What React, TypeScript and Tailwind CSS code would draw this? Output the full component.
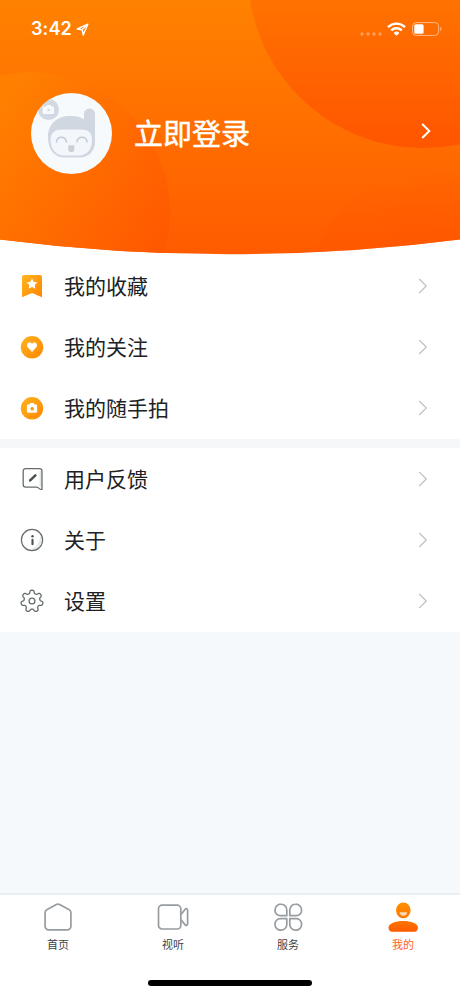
import type { ReactNode } from "react";

type Row = { label: string; icon: ReactNode };

function Chevron({ className }: { className: string }) {
  return (
    <svg viewBox="0 0 10 16" fill="none" stroke="currentColor" className={className}>
      <path d="M1.2 1 8.3 8 1.2 15" />
    </svg>
  );
}

function BookmarkIcon() {
  return (
    <svg width="24" height="24" viewBox="0 0 24 24">
      <path d="M4 1h16a2 2 0 0 1 2 2v20.3l-10-4.3-10 4.3V3a2 2 0 0 1 2-2Z" fill="url(#amber)" />
      <path d="m12 4.5 1.7 3.3 3.7.6-2.7 2.6.6 3.7-3.3-1.7-3.3 1.7.6-3.7-2.7-2.6 3.7-.6Z" fill="#fff" />
    </svg>
  );
}

function HeartIcon() {
  return (
    <svg width="24" height="24" viewBox="0 0 24 24">
      <circle cx="12" cy="12.3" r="11.2" fill="url(#amber)" />
      <path d="M12 17 7.9 12.6C5.9 10.4 7.3 7.6 9.6 7.6c1.1 0 1.9.5 2.4 1.3.5-.8 1.3-1.3 2.4-1.3 2.3 0 3.7 2.8 1.7 5Z" fill="#fff" />
    </svg>
  );
}

function CameraIcon() {
  return (
    <svg width="24" height="24" viewBox="0 0 24 24">
      <circle cx="12" cy="12.3" r="11.2" fill="url(#amber)" />
      <path d="M8.1 8.4h1.4l.8-1.5h3.4l.8 1.5h1.4c.7 0 1.2.5 1.2 1.2v6c0 .7-.5 1.2-1.2 1.2H8.1c-.7 0-1.2-.5-1.2-1.2v-6c0-.7.5-1.2 1.2-1.2Z" fill="#fff" />
      <circle cx="12.2" cy="12.8" r="1.8" fill="#ff9800" />
    </svg>
  );
}

function FeedbackIcon() {
  return (
    <svg width="24" height="24" viewBox="0 0 24 24" fill="none">
      <path d="M19.5 3.5v15l1.9 2.8V4.2Z" fill="#dfe4e5" />
      <path
        d="M5.6 1.6h14A2.4 2.4 0 0 1 22 4v18.4c-1.6.3-2.3-.3-3-1-.7-.8-1.5-1.3-2.6-1.3H5.6a2.4 2.4 0 0 1-2.4-2.4V4a2.4 2.4 0 0 1 2.4-2.4Z"
        stroke="#666c6e"
        strokeWidth="1.3"
        strokeLinejoin="round"
      />
      <path d="m10.4 13.1 5-4.7" stroke="#4b5052" strokeWidth="2.5" strokeLinecap="round" />
      <path d="m8.8 14.8.6-2.5 1.9 1.8Z" fill="#4b5052" />
    </svg>
  );
}

function InfoIcon() {
  return (
    <svg width="24" height="24" viewBox="0 0 24 24" fill="none">
      <path d="M20.4 7.5a10 10 0 0 1-12 13.8C15 21 20 15.5 20.4 7.5Z" fill="#e6eaeb" />
      <circle cx="12" cy="12" r="10.6" stroke="#666c6e" strokeWidth="1.2" />
      <circle cx="12.5" cy="8.2" r="1.2" fill="#4b5052" />
      <path d="M12.5 11.9v4.3" stroke="#4b5052" strokeWidth="2.1" strokeLinecap="round" />
    </svg>
  );
}

// seven rounded teeth, the first one pointing up
const gearPath =
  Array.from({ length: 140 }, (_, i) => {
    const angle = (i / 140) * Math.PI * 2;
    const r = 9.5 + 1.55 * Math.tanh(2 * Math.cos(7 * angle));
    const x = 12 + r * Math.sin(angle);
    const y = 12.2 - r * Math.cos(angle);
    return `${i === 0 ? "M" : "L"}${x.toFixed(2)} ${y.toFixed(2)}`;
  }).join("") + "Z";

function GearIcon() {
  return (
    <svg width="24" height="24" viewBox="0 0 24 24" fill="none" stroke="#666c6e" strokeWidth="1.3" strokeLinejoin="round">
      <path d="M19.5 12.5a8 8 0 0 1-9 7.5c4 .5 8-3 9-7.5Z" fill="#e6eaeb" stroke="none" />
      <path d={gearPath} />
      <circle cx="12" cy="12" r="2.9" />
    </svg>
  );
}

const groups: Row[][] = [
  [
    { label: "我的收藏", icon: <BookmarkIcon /> },
    { label: "我的关注", icon: <HeartIcon /> },
    { label: "我的随手拍", icon: <CameraIcon /> },
  ],
  [
    { label: "用户反馈", icon: <FeedbackIcon /> },
    { label: "关于", icon: <InfoIcon /> },
    { label: "设置", icon: <GearIcon /> },
  ],
];

const tabs = [
  {
    label: "首页",
    icon: (
      <path d="M14.3 2.5a3.5 3.5 0 0 1 3.4 0l9.5 5.3a3.2 3.2 0 0 1 1.7 2.8v13.7a3.6 3.6 0 0 1-3.6 3.6H6.700a3.600 3.600 0 0 1-3.600-3.600V10.600a3.200 3.200 0 0 1 1.700-2.800Z" />
    ),
  },
  {
    label: "视听",
    icon: (
      <>
        <rect x="1.5" y="3.2" width="22.3" height="23.8" rx="3.6" />
        <path d="M24 12.5 28.2 7.3c.8-1 2.4-.6 2.4.8v14c0 1.4-1.6 1.8-2.4.8L24 17.7" />
      </>
    ),
  },
  {
    label: "服务",
    icon: (
      <>
        <path d="M9 2.2A5.8 5.8 0 0 1 14.800 8v5.700H8.300A5.300 5.300 0 0 1 3 8.400V8a5.800 5.800 0 0 1 6-5.800Z" />
        <path d="M23.600 2.200A5.800 5.800 0 0 0 17.800 8v5.700h6.500a5.300 5.300 0 0 0 5.300-5.300V8a5.800 5.800 0 0 0-6-5.800Z" />
        <path d="M9 28.200a5.800 5.800 0 0 0 5.800-5.800v-5.700H8.300A5.300 5.300 0 0 0 3 22v.4a5.800 5.800 0 0 0 6 5.800Z" />
        <path d="M23.600 28.200a5.800 5.800 0 0 1-5.800-5.800v-5.700h6.500a5.300 5.300 0 0 1 5.300 5.300v.4a5.800 5.800 0 0 1-6 5.800Z" />
      </>
    ),
  },
  {
    label: "我的",
    active: true,
    icon: (
      <g stroke="none">
        <ellipse cx="16.3" cy="8.3" rx="7.3" ry="7.9" fill="url(#head)" />
        <path d="M12.6 10.200h7.500c-.2 2.600-1.500 3.500-3.700 3.500s-3.600-.9-3.800-3.500Z" fill="#ffe3c4" opacity=".9" />
        <path d="M1.500 25.500C1.500 21.500 8.400 19 16.200 19s14.700 2.500 14.700 6.500c0 2.500-1.200 4.200-3.500 4.200H5c-2.300 0-3.500-1.700-3.500-4.200Z" fill="url(#torso)" />
      </g>
    ),
  },
];

function Gradients() {
  return (
    <svg className="absolute size-0">
      <defs>
        <linearGradient id="amber" x1="0" y1="0" x2="1" y2="1">
          <stop stopColor="#ffb51f" />
          <stop offset="1" stopColor="#ff8500" />
        </linearGradient>
        <linearGradient id="head" x1="0" y1="0" x2="0" y2="1">
          <stop stopColor="#ff9000" />
          <stop offset="1" stopColor="#ff7800" />
        </linearGradient>
        <linearGradient id="torso" x1="0" y1="0" x2="0" y2="1">
          <stop stopColor="#ff7600" />
          <stop offset="1" stopColor="#ff5a00" />
        </linearGradient>
      </defs>
    </svg>
  );
}

function HeaderBackground() {
  return (
    <svg className="absolute inset-0" width="460" height="256" viewBox="0 0 460 256">
      <defs>
        <linearGradient id="base" x1="0" y1="0" x2="0" y2="1">
          <stop stopColor="#ff8200" />
          <stop offset="1" stopColor="#ff5b00" />
        </linearGradient>
        <linearGradient id="bubbleTop" gradientUnits="userSpaceOnUse" x1="0" y1="0" x2="0" y2="148">
          <stop stopColor="#ff7200" />
          <stop offset="1" stopColor="#ff5500" />
        </linearGradient>
        <linearGradient id="bubbleLeft" gradientUnits="userSpaceOnUse" x1="0" y1="110" x2="165" y2="235">
          <stop stopColor="#ff7f00" />
          <stop offset="1" stopColor="#ff5900" />
        </linearGradient>
        <linearGradient id="bubbleRight" gradientUnits="userSpaceOnUse" x1="390" y1="180" x2="405" y2="255">
          <stop stopColor="#ff5500" stopOpacity="0" />
          <stop offset="1" stopColor="#ff5500" stopOpacity=".7" />
        </linearGradient>
        <clipPath id="curve">
          <path d="M0 0h460v239.500Q230 269 0 239.500Z" />
        </clipPath>
      </defs>
      <g clipPath="url(#curve)">
        <rect width="460" height="256" fill="url(#base)" />
        <circle cx="30" cy="212" r="140" fill="url(#bubbleLeft)" />
        <circle cx="430" cy="290" r="120" fill="url(#bubbleRight)" />
        <circle cx="423" cy="-27" r="175" fill="url(#bubbleTop)" />
      </g>
    </svg>
  );
}

function Avatar() {
  return (
    <svg width="81" height="81" viewBox="0 0 81 81">
      <defs>
        <clipPath id="round">
          <circle cx="40.5" cy="40.5" r="40.5" />
        </clipPath>
      </defs>
      <g clipPath="url(#round)">
        <rect width="81" height="81" fill="#f7fafd" />
        <circle cx="17.500" cy="16.500" r="10.500" fill="#d2d9e3" />
        <path d="M13 13.500h2.200l1.300-1.600h3l1.300 1.600h1c.8 0 1.200.5 1.200 1.200v5c0 .8-.5 1.300-1.300 1.300H13c-.8 0-1.300-.5-1.300-1.300v-4.900c0-.8.5-1.300 1.300-1.300Z" fill="#f7fafd" />
        <path d="m16.500 15 3 2-3 1.800Z" fill="#d2d9e3" />
        <path d="M17 44c0-13 9-21 22-21 6 0 10 .6 14 3.400V21a5.500 5.500 0 0 1 11 0v28c0 9-6.500 15.500-15 15.500H33c-9.500 0-16-8-16-20.500Z" fill="#d0d7e1" />
        <path d="M19.500 47c0-7.500 4.500-10.500 12-10.500h18c8 0 11.500 3 11.500 10.500 0 9-5 15.500-13 15.500H33C25 62.500 19.500 56 19.500 47Z" fill="#f3f7fb" />
        <path d="M25.500 49c.7-6.500 9-6.500 10 0M46 49c.8-6.500 9.300-6.500 10 0" fill="none" stroke="#c2cad4" strokeWidth="1.500" strokeLinecap="round" />
        <path d="M37.300 52.300h6v4.300c0 3.500-6 3.500-6 0Z" fill="#cbd0d8" />
      </g>
    </svg>
  );
}

function StatusBar() {
  return (
    <div className="flex h-[58px] items-center pr-[18px] pl-[31px] text-white">
      <span className="font-[Inter,sans-serif] text-[18px] leading-none font-semibold tracking-[0.1px]">3:42</span>
      <svg width="13" height="13" viewBox="0 0 13 13" className="ml-[4px]" fill="none" stroke="#fff" strokeWidth="1.4" strokeLinejoin="round">
        <path d="M11.8 1.200 1.200 6l5 .7 1 5.300Z" />
        <path d="M11.400 1.500 6.300 6.500" />
      </svg>
      <svg width="22" height="4" viewBox="0 0 22 4" className="mt-[9px] ml-auto" fill="#fff" opacity=".35">
        <circle cx="2" cy="2" r="1.7" />
        <circle cx="8" cy="2" r="1.7" />
        <circle cx="14" cy="2" r="1.7" />
        <circle cx="20" cy="2" r="1.7" />
      </svg>
      <svg width="19" height="14" viewBox="0 0 19 14" className="mb-px ml-[5px]" fill="none" stroke="#fff" strokeWidth="2.4">
        <path d="M1 5.100a12.200 12.200 0 0 1 17 0" />
        <path d="M4.200 8.400a7.600 7.600 0 0 1 10.600 0" />
        <path d="m9.500 13.800-2.900-2.900a4.200 4.200 0 0 1 5.800 0Z" fill="#fff" stroke="none" />
      </svg>
      <svg width="30" height="14" viewBox="0 0 30 14" className="mb-px ml-[6px]" fill="none">
        <rect x=".6" y=".6" width="26" height="12.800" rx="3.500" stroke="#fff" strokeOpacity=".5" />
        <rect x="2.300" y="2.300" width="9.300" height="9.400" rx="1.500" fill="#fff" />
        <path d="M28.200 4.800v4.400c1.800-.7 1.800-3.700 0-4.400Z" fill="#fff" opacity=".5" />
      </svg>
    </div>
  );
}

function TabBar() {
  return (
    <nav className="h-[103px] border-t-2 border-[#ebeff2] bg-white">
      <div className="grid grid-cols-4 pt-[7px]">
        {tabs.map((tab) => (
          <div key={tab.label} className="flex flex-col items-center">
            <svg width="32" height="32" viewBox="0 0 32 32" fill="none" stroke="#979ca0" strokeWidth="1.7" strokeLinejoin="round">
              {tab.icon}
            </svg>
            <span className={tab.active ? "mt-[2px] ml-px text-[11px] leading-4 text-[#ff6428]" : "mt-[2px] ml-px text-[11px] leading-4 text-[#404346]"}>
              {tab.label}
            </span>
          </div>
        ))}
      </div>
      <div className="mx-auto mt-[28px] h-[6px] w-[164px] rounded-full bg-black" />
    </nav>
  );
}

export default function App() {
  return (
    <div className="flex h-[996px] w-[460px] flex-col overflow-hidden bg-[#f5f9fc] font-['Noto_Sans_CJK_SC',sans-serif]">
      <Gradients />
      <header className="relative h-[255px] shrink-0 bg-white">
        <HeaderBackground />
        <div className="relative">
          <StatusBar />
          <div className="mt-[35px] flex items-center pr-[29px] pl-[31px] text-white">
            <Avatar />
            <h1 className="mb-[3px] ml-[22px] text-[29px] leading-none font-normal [-webkit-text-stroke:0.5px_white]">立即登录</h1>
            <Chevron className="mb-[6px] ml-auto h-4 w-[10px] stroke-2" />
          </div>
        </div>
      </header>

      <main className="flex-1">
        {groups.map((rows, i) => (
          <ul key={i} className="h-[193px] border-[#f5f7f8] bg-white not-last:border-b-[9px] last:h-[184px]">
            {rows.map((row) => (
              <li key={row.label} className="flex h-[61.3px] items-center pr-[32px] pl-[20px]">
                {row.icon}
                <span className="mb-px ml-[20px] text-[21px] leading-none text-[#202124]">{row.label}</span>
                <Chevron className="ml-auto h-4 w-[10px] stroke-[1.2] text-[#bfc1c3]" />
              </li>
            ))}
          </ul>
        ))}
      </main>

      <TabBar />
    </div>
  );
}
